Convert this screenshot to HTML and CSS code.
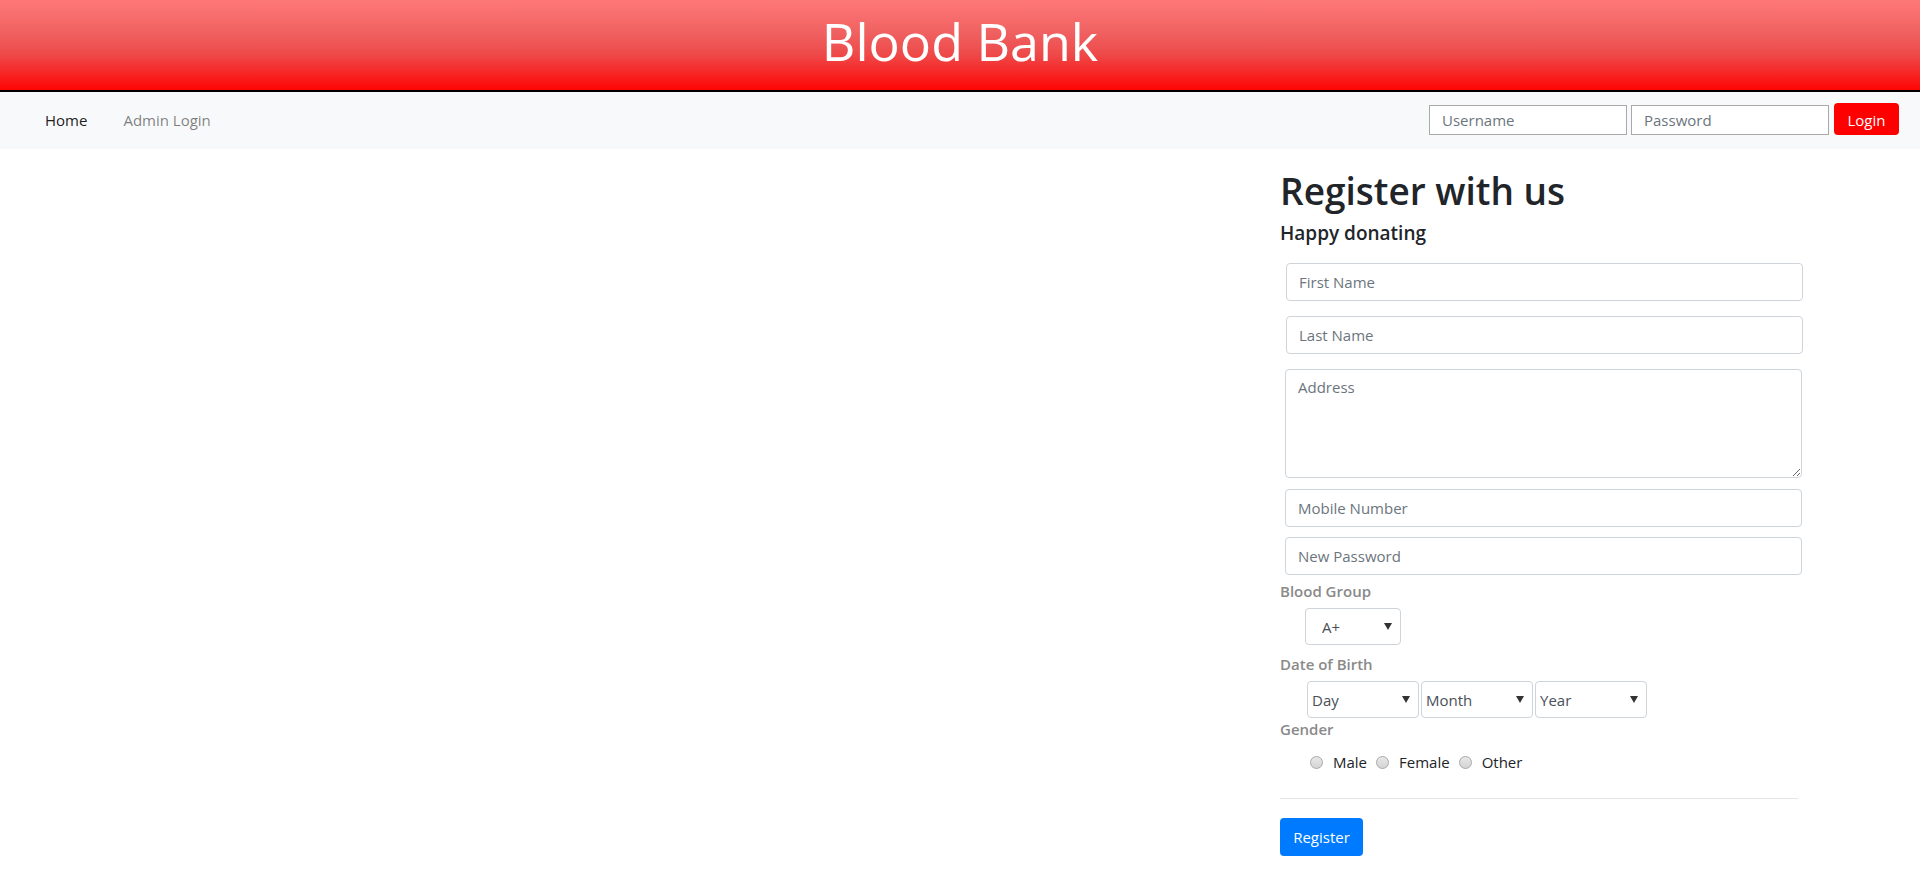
FILE: index.html
```html
<!DOCTYPE html>
<html lang="en">
<head>
<meta charset="utf-8">
<title>Blood Bank</title>
<link rel="stylesheet" href="styles.css">
</head>
<body>
<header class="banner">
  <h1 class="banner-title">Blood Bank</h1>
</header>
<nav class="navbar">
  <ul class="nav-links">
    <li><a class="nav-link active" href="#">Home</a></li>
    <li><a class="nav-link" href="#">Admin Login</a></li>
  </ul>
  <form class="login-form">
    <input class="login-input" type="text" placeholder="Username">
    <input class="login-input login-input-pass" type="password" placeholder="Password">
    <button class="login-btn" type="button">Login</button>
  </form>
</nav>
<main class="main">
  <div class="left-col"></div>
  <section class="register">
    <h1 class="reg-title">Register with us</h1>
    <h5 class="reg-sub">Happy donating</h5>
    <form class="reg-form">
      <input class="field field-first" type="text" placeholder="First Name">
      <input class="field field-last" type="text" placeholder="Last Name">
      <textarea class="field field-area" placeholder="Address"></textarea>
      <input class="field field-mobile" type="text" placeholder="Mobile Number">
      <input class="field field-pass" type="password" placeholder="New Password">

      <label class="group-label label-blood">Blood Group</label>
      <div class="select-row row-blood">
        <span class="sel sel-blood"><select><option>A+</option><option>A-</option><option>B+</option><option>B-</option><option>O+</option><option>O-</option><option>AB+</option><option>AB-</option></select></span>
      </div>

      <label class="group-label label-dob">Date of Birth</label>
      <div class="select-row row-dob">
        <span class="sel sel-date"><select><option>Day</option></select></span>
        <span class="sel sel-date"><select><option>Month</option></select></span>
        <span class="sel sel-date"><select><option>Year</option></select></span>
      </div>

      <label class="group-label label-gender">Gender</label>
      <div class="radio-row">
        <label class="radio-item"><input type="radio" name="gender"><span>Male</span></label>
        <label class="radio-item"><input type="radio" name="gender"><span>Female</span></label>
        <label class="radio-item"><input type="radio" name="gender"><span>Other</span></label>
      </div>

      <hr class="divider">
      <button class="reg-btn" type="button">Register</button>
    </form>
  </section>
</main>
</body>
</html>
```
FILE: styles.css
```css
* { box-sizing: border-box; }

html, body {
  margin: 0;
  padding: 0;
  background: #fff;
}

body {
  font-family: "Open Sans", "Noto Sans", "Liberation Sans", sans-serif;
  font-size: 16px;
  line-height: 1.5;
  color: #212529;
}

/* ---------- banner ---------- */
.banner {
  height: 92px;
  padding-top: 10px;
  background: linear-gradient(to bottom, #ff7878 0%, #f06262 35%, #ee4a4a 60%, #ff0505 100%);
  border-bottom: 2px solid #000;
  text-align: center;
}

.banner-title {
  margin: 0;
  font-size: 52px;
  font-weight: 400;
  line-height: 1.2;
  color: #fff;
}

/* ---------- navbar ---------- */
.navbar {
  height: 57px;
  background: #f8f9fa;
  display: flex;
  align-items: center;
  justify-content: space-between;
  padding: 0 21px 0 27px;
}

.nav-links {
  list-style: none;
  margin: 0;
  padding: 0;
  display: flex;
}

.nav-link {
  display: block;
  padding: 0 18px;
  font-size: 15px;
  text-decoration: none;
  color: rgba(0, 0, 0, 0.5);
}

.nav-link.active {
  color: rgba(0, 0, 0, 0.9);
}

.login-form {
  display: flex;
  align-items: center;
  margin-top: -3px;
}

.login-input {
  width: 198px;
  height: 30px;
  margin: 2px 0 0 0;
  padding: 0 12px;
  border: 1px solid #a9a9a9;
  background: #fff;
  font-family: inherit;
  font-size: 15px;
  color: #495057;
}

.login-input::placeholder { color: #6c757d; }

.login-input-pass { margin-left: 4px; }

.login-btn {
  width: 65px;
  height: 32px;
  margin-left: 5px;
  padding: 2px 0 0;
  border: 0;
  border-radius: 4px;
  background: #ff0000;
  color: #fff;
  font-family: inherit;
  font-size: 15px;
}

/* ---------- main ---------- */
.main {
  display: grid;
  grid-template-columns: 1280px 518px;
}

.register {
  padding-bottom: 20px;
}

.reg-title {
  margin: 18px 0 6px;
  font-size: 37px;
  font-weight: 600;
  line-height: 48px;
}

.reg-sub {
  margin: 0;
  font-size: 19px;
  font-weight: 600;
  line-height: 24px;
}

.reg-form {
  display: flex;
  flex-direction: column;
  align-items: flex-start;
  padding-top: 18px;
}

.field {
  display: block;
  width: 517px;
  height: 38px;
  margin-left: 6px;
  padding: 6px 12px;
  border: 1px solid #ced4da;
  border-radius: 4px;
  background: #fff;
  font-family: inherit;
  font-size: 15px;
  line-height: 1.5;
  color: #495057;
}

.field::placeholder { color: #6c757d; }

.field-last { margin-top: 15px; }

.field-area {
  height: 109px;
  margin-top: 15px;
  margin-left: 5px;
  resize: vertical;
}

.field-mobile { margin-top: 11px; margin-left: 5px; }
.field-pass { margin-top: 10px; margin-left: 5px; }

.group-label {
  display: block;
  font-size: 15px;
  font-weight: 600;
  line-height: 22px;
  color: #8a8a8a;
}

.label-blood { margin-top: 5px; }
.label-dob { margin-top: 8px; }
.label-gender { margin-top: 0; }

.select-row {
  display: flex;
  gap: 2px;
  margin-top: 6px;
}

.row-blood { padding-left: 25px; }
.row-dob { padding-left: 27px; }

.sel {
  position: relative;
  display: block;
}

.sel select {
  display: block;
  appearance: none;
  -webkit-appearance: none;
  height: 37px;
  border: 1px solid #ced4da;
  border-radius: 4px;
  background: #fff;
  font-family: inherit;
  font-size: 15px;
  color: #495057;
}

.sel::after {
  content: "";
  position: absolute;
  top: 15px;
  width: 0;
  height: 0;
  border-left: 4px solid transparent;
  border-right: 4px solid transparent;
  border-top: 7px solid #333;
  pointer-events: none;
}

.sel-blood select {
  width: 96px;
  padding: 0 0 0 16px;
}

.sel-blood::after { right: 9px; }

.sel-date select {
  width: 112px;
  padding: 0 0 0 4px;
}

.sel-date::after { right: 9px; }

.radio-row {
  display: flex;
  align-items: center;
  height: 24px;
  margin-top: 10px;
  padding-left: 30px;
  font-size: 15px;
}

.radio-item {
  display: flex;
  align-items: center;
  margin-right: 9px;
  color: #212529;
}

.radio-item input {
  appearance: none;
  -webkit-appearance: none;
  width: 13px;
  height: 13px;
  margin: 0 10px 0 0;
  border: 1px solid #a8a8a8;
  border-radius: 50%;
  background: linear-gradient(to bottom, #e8e8e8, #d4d4d4);
}

.divider {
  align-self: stretch;
  margin: 24px 0 19px;
  border: 0;
  border-top: 1px solid rgba(0, 0, 0, 0.1);
}

.reg-btn {
  width: 83px;
  height: 38px;
  padding: 0;
  border: 0;
  border-radius: 4px;
  background: #007bff;
  color: #fff;
  font-family: inherit;
  font-size: 15px;
}
```
